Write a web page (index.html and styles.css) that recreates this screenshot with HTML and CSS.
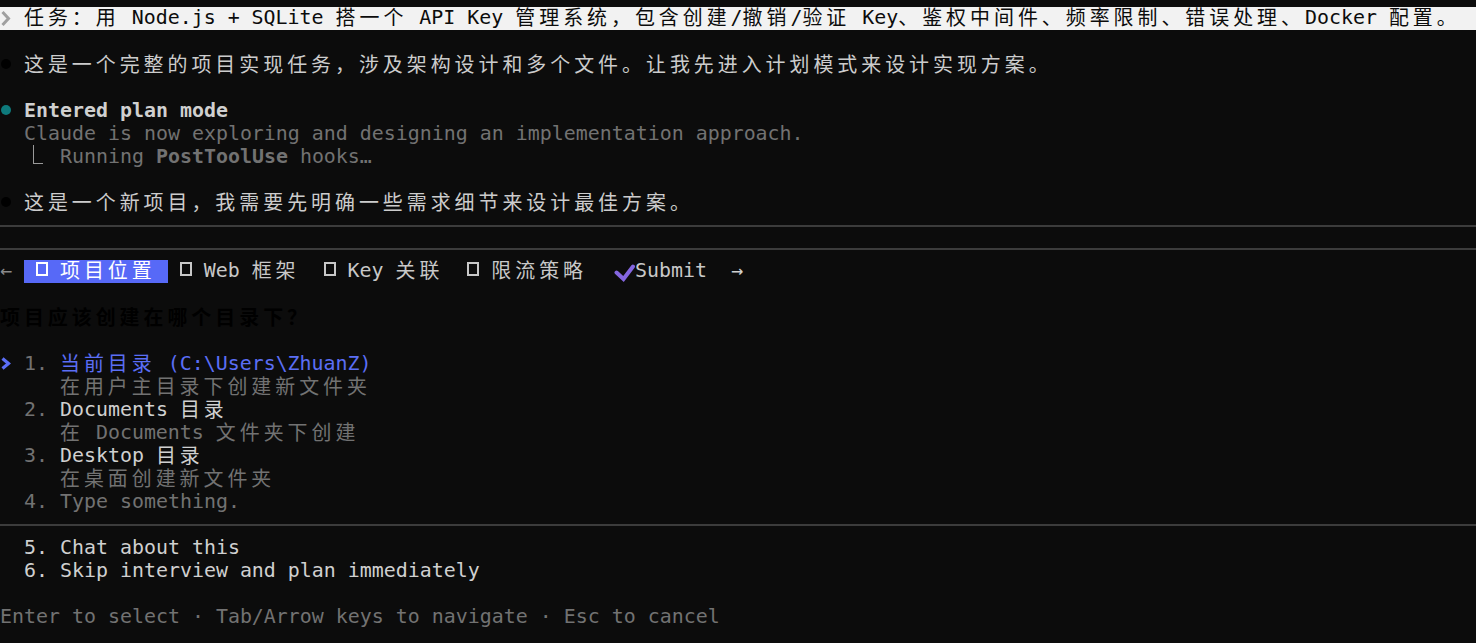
FILE: index.html
```html
<!DOCTYPE html>
<html lang="zh-CN">
<head>
<meta charset="utf-8">
<title>Claude Code</title>
<link rel="stylesheet" href="styles.css">
</head>
<body>
<div class="term">
  <div class="line prompt"><svg class="chev" width="12" height="23" viewBox="0 0 12 23"><polyline points="2.5,5 8.5,11.5 2.5,18" /></svg> <span class="w">任务：用</span> Node.js + SQLite <span class="w">搭一个</span> API Key <span class="w">管理系统，包含创建</span>/<span class="w">撤销</span>/<span class="w">验证</span> Key<span class="w">、鉴权中间件、频率限制、错误处理、</span>Docker <span class="w">配置。</span></div>
  <div class="line"></div>
  <div class="line"><span class="dot dot-black"></span><span class="w">这是一个完整的项目实现任务，涉及架构设计和多个文件。让我先进入计划模式来设计实现方案。</span></div>
  <div class="line"></div>
  <div class="line"><span class="dot dot-teal"></span><b class="hi">Entered plan mode</b></div>
  <div class="line dim">  Claude is now exploring and designing an implementation approach.</div>
  <div class="line dim">  <span class="hook"></span>Running <b>PostToolUse</b> hooks…</div>
  <div class="line"></div>
  <div class="line"><span class="dot dot-black"></span><span class="w">这是一个新项目，我需要先明确一些需求细节来设计最佳方案。</span></div>
  <div class="rule"></div>
  <div class="rule"></div>
  <div class="line tabs"><span class="arrow-l">←</span> <span class="sel"> <span class="box"></span> <span class="w">项目位置</span> </span> <span class="box"></span> Web <span class="w">框架</span>  <span class="box"></span> Key <span class="w">关联</span>  <span class="box"></span> <span class="w">限流策略</span>  <svg class="check" width="24" height="23" viewBox="0 0 24 23"><polyline points="5.5,12.5 12.5,19 22,6.5" /></svg>Submit  <span class="arrow-r">→</span></div>
  <div class="line"></div>
  <div class="line question"><span class="w">项目应该创建在哪个目录下？</span></div>
  <div class="line"></div>
  <div class="line"><svg class="chev chev-blue" width="12" height="23" viewBox="0 0 12 23"><polyline points="2.5,6.5 8.5,11.5 2.5,16.5" /></svg> <span class="dim">1.</span> <span class="blue"><span class="w">当前目录</span> (C:\Users\ZhuanZ)</span></div>
  <div class="line dim">     <span class="w">在用户主目录下创建新文件夹</span></div>
  <div class="line">  <span class="dim">2.</span> <span class="hi">Documents <span class="w">目录</span></span></div>
  <div class="line dim">     <span class="w">在</span> Documents <span class="w">文件夹下创建</span></div>
  <div class="line">  <span class="dim">3.</span> <span class="hi">Desktop <span class="w">目录</span></span></div>
  <div class="line dim">     <span class="w">在桌面创建新文件夹</span></div>
  <div class="line dim">  4. Type something.</div>
  <div class="rule"></div>
  <div class="line hi">  5. Chat about this</div>
  <div class="line hi">  6. Skip interview and plan immediately</div>
  <div class="line"></div>
  <div class="line dim">Enter to select · Tab/Arrow keys to navigate · Esc to cancel</div>
</div>
</body>
</html>
```

FILE: styles.css
```css
html, body {
  margin: 0;
  padding: 0;
  background: #0c0c0c;
}

body {
  font-family: "DejaVu Sans Mono", "Noto Sans CJK SC", monospace;
  font-size: 19.93px;
  color: #cccccc;
  overflow: hidden;
}

.term {
  padding-top: 7px;
}

.line {
  height: 23px;
  line-height: 23px;
  white-space: pre;
  overflow: visible;
}

.w {
  font-family: "Noto Sans CJK SC", sans-serif;
  letter-spacing: 4px;
  line-height: 17px;
  vertical-align: -1px;
}

b {
  font-weight: bold;
}

.hi {
  color: #d0d0d0;
}

.dim {
  color: #727272;
}

.blue {
  color: #5b6ef5;
}

.prompt {
  background: #f2f2f2;
  color: #0c0c0c;
  line-height: 22px;
}

.chev {
  display: inline-block;
  vertical-align: top;
}

.chev polyline {
  fill: none;
  stroke: #a0a0a0;
  stroke-width: 3;
  stroke-linecap: butt;
  stroke-linejoin: miter;
}

.chev-blue polyline {
  stroke: #5b6ef5;
  stroke-width: 3.2;
}

.dot {
  display: inline-block;
  width: 10px;
  height: 10px;
  border-radius: 50%;
  margin-left: 1px;
  margin-right: 13px;
  vertical-align: 2px;
}

.dot-black {
  background: #000000;
}

.dot-teal {
  background: #0e7a7c;
}

.hook {
  display: inline-block;
  width: 36px;
  height: 23px;
  vertical-align: top;
}

.hook::before {
  content: "";
  display: block;
  margin-left: 9px;
  width: 10px;
  height: 19px;
  box-sizing: border-box;
  border-left: 1.5px solid #9a9a9a;
  border-bottom: 1.5px solid #9a9a9a;
}

.rule {
  height: 23px;
  display: flex;
  align-items: center;
}

.rule::before {
  content: "";
  flex: 1;
  height: 2px;
  background: #3c3c3c;
}

.tabs {
  color: #c8c8c8;
  line-height: 22px;
}

.arrow-l {
  color: #8a8a8a;
}

.arrow-r {
  color: #d0d0d0;
}

.sel {
  display: inline-block;
  height: 23px;
  line-height: 22px;
  vertical-align: top;
  background: #5769f7;
  color: #ffffff;
}

.box {
  display: inline-block;
  width: 12px;
  vertical-align: 1px;
}

.box::before {
  content: "";
  display: block;
  width: 12px;
  height: 14px;
  box-sizing: border-box;
  border: 2px solid currentColor;
}

.check {
  display: inline-block;
  vertical-align: top;
}

.check polyline {
  fill: none;
  stroke: #8466e0;
  stroke-width: 4;
  stroke-linecap: round;
  stroke-linejoin: miter;
}

.question {
  color: #000000;
  font-weight: bold;
}

.question .w {
  font-weight: bold;
}
```
